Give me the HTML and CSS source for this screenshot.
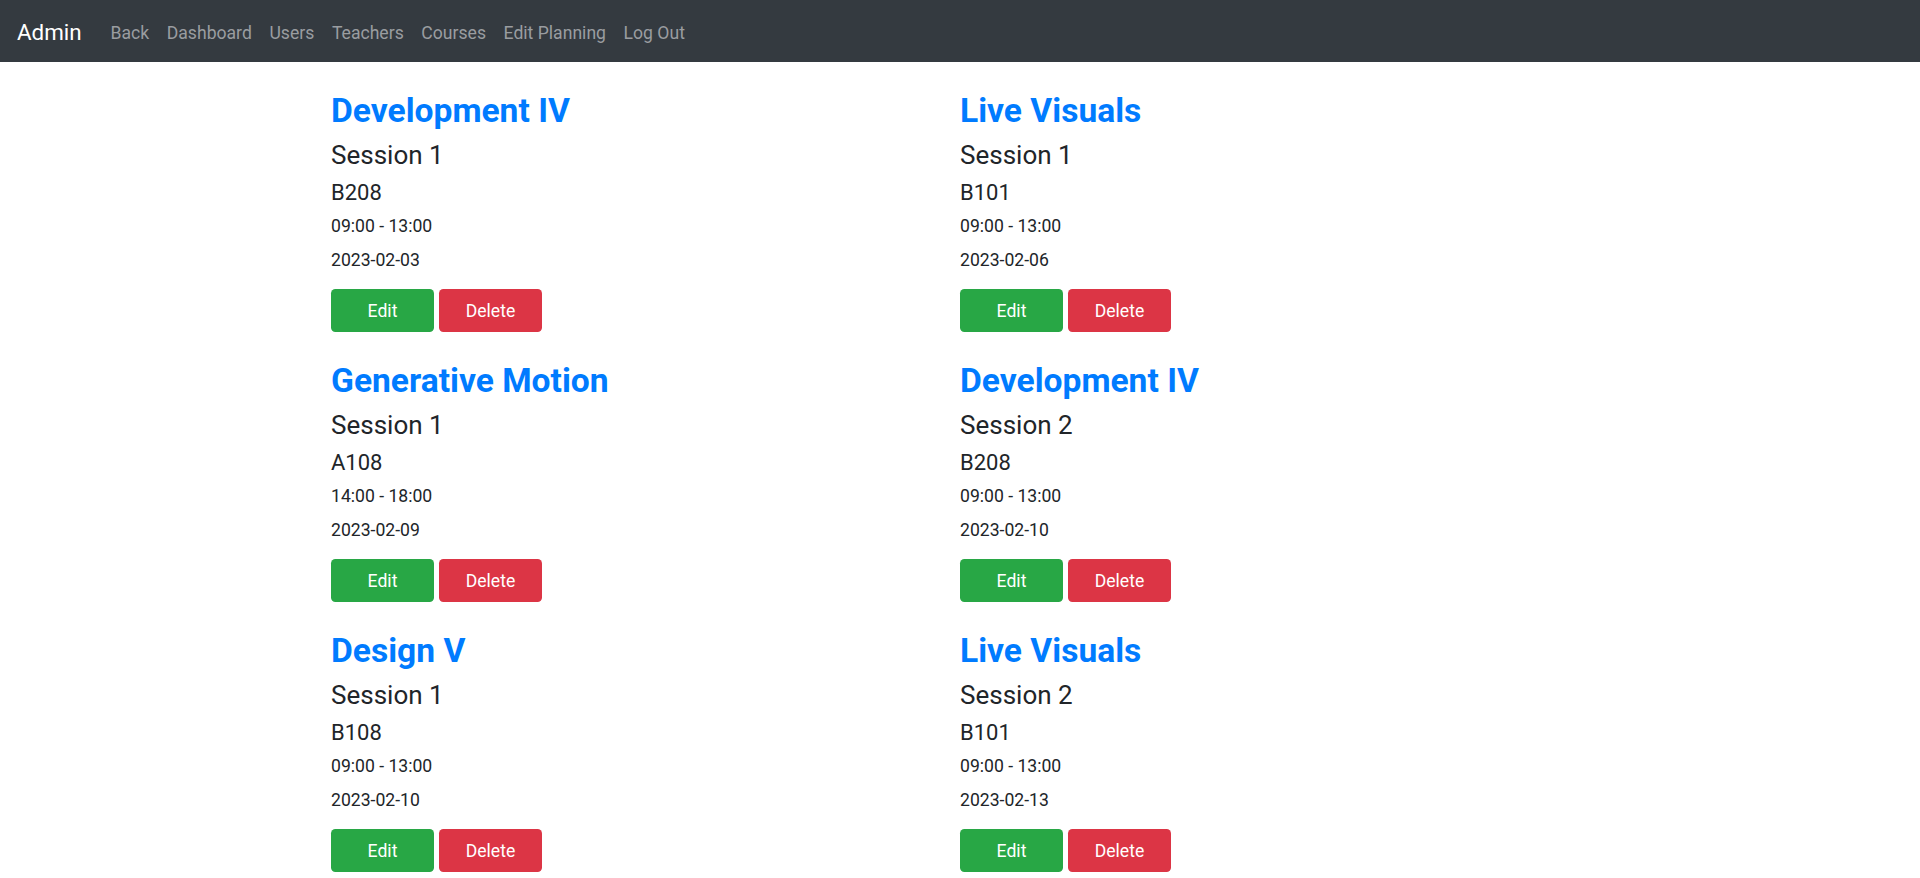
FILE: index.html
```html
<!DOCTYPE html>
<html lang="en">
<head>
<meta charset="utf-8">
<title>Admin - Planning</title>
<link rel="stylesheet" href="styles.css">
</head>
<body>
<nav class="navbar">
  <a class="brand" href="#">Admin</a>
  <ul class="nav">
    <li><a class="nav-link" href="#">Back</a></li>
    <li><a class="nav-link" href="#">Dashboard</a></li>
    <li><a class="nav-link" href="#">Users</a></li>
    <li><a class="nav-link" href="#">Teachers</a></li>
    <li><a class="nav-link" href="#">Courses</a></li>
    <li><a class="nav-link" href="#">Edit Planning</a></li>
    <li><a class="nav-link" href="#">Log Out</a></li>
  </ul>
</nav>
<main class="container">
  <section class="card">
    <h2 class="course">Development IV</h2>
    <h4 class="session">Session 1</h4>
    <h5 class="room">B208</h5>
    <p class="meta">09:00 - 13:00</p>
    <p class="meta date">2023-02-03</p>
    <div class="actions"><a class="btn btn-edit" href="#">Edit</a><a class="btn btn-delete" href="#">Delete</a></div>
  </section>
  <section class="card">
    <h2 class="course">Live Visuals</h2>
    <h4 class="session">Session 1</h4>
    <h5 class="room">B101</h5>
    <p class="meta">09:00 - 13:00</p>
    <p class="meta date">2023-02-06</p>
    <div class="actions"><a class="btn btn-edit" href="#">Edit</a><a class="btn btn-delete" href="#">Delete</a></div>
  </section>
  <section class="card">
    <h2 class="course">Generative Motion</h2>
    <h4 class="session">Session 1</h4>
    <h5 class="room">A108</h5>
    <p class="meta">14:00 - 18:00</p>
    <p class="meta date">2023-02-09</p>
    <div class="actions"><a class="btn btn-edit" href="#">Edit</a><a class="btn btn-delete" href="#">Delete</a></div>
  </section>
  <section class="card">
    <h2 class="course">Development IV</h2>
    <h4 class="session">Session 2</h4>
    <h5 class="room">B208</h5>
    <p class="meta">09:00 - 13:00</p>
    <p class="meta date">2023-02-10</p>
    <div class="actions"><a class="btn btn-edit" href="#">Edit</a><a class="btn btn-delete" href="#">Delete</a></div>
  </section>
  <section class="card">
    <h2 class="course">Design V</h2>
    <h4 class="session">Session 1</h4>
    <h5 class="room">B108</h5>
    <p class="meta">09:00 - 13:00</p>
    <p class="meta date">2023-02-10</p>
    <div class="actions"><a class="btn btn-edit" href="#">Edit</a><a class="btn btn-delete" href="#">Delete</a></div>
  </section>
  <section class="card">
    <h2 class="course">Live Visuals</h2>
    <h4 class="session">Session 2</h4>
    <h5 class="room">B101</h5>
    <p class="meta">09:00 - 13:00</p>
    <p class="meta date">2023-02-13</p>
    <div class="actions"><a class="btn btn-edit" href="#">Edit</a><a class="btn btn-delete" href="#">Delete</a></div>
  </section>
</main>
</body>
</html>
```
FILE: styles.css
```css
* { box-sizing: border-box; }
html, body { margin: 0; padding: 0; }
body {
  font-family: Roboto, "Open Sans", "Liberation Sans", sans-serif;
  color: #212529;
  background: #fff;
  font-size: 17.6px;
}
a { text-decoration: none; }
h2, h4, h5, p { margin: 0; }

.navbar {
  display: flex;
  align-items: center;
  height: 62px;
  padding: 0 16px 0 17px;
  background: #343a40;
}
.brand {
  color: #fff;
  font-size: 22.4px;
  line-height: 30px;
  margin-right: 20px;
  padding-top: 2px;
}
.nav {
  display: flex;
  list-style: none;
  margin: 0;
  padding: 0;
}
.nav-link {
  display: block;
  color: #9a9da0;
  font-size: 17.6px;
  line-height: 26px;
  padding: 4px 8.8px 0;
}

.container {
  width: 1258px;
  margin: 0 auto;
  padding-top: 29px;
  display: grid;
  grid-template-columns: 629px 629px;
  row-gap: 29px;
}
.card { display: flex; flex-direction: column; align-items: flex-start; }
.course {
  color: #007bff;
  font-size: 33.6px;
  font-weight: 700;
  line-height: 40px;
  margin-bottom: 8px;
}
.session {
  font-size: 26px;
  font-weight: 400;
  line-height: 32px;
  margin-bottom: 9px;
}
.room {
  font-size: 22px;
  font-weight: 400;
  line-height: 26px;
  margin-bottom: 6px;
}
.meta {
  font-size: 17.6px;
  line-height: 28px;
}
.date { margin-top: 6px; margin-bottom: 15px; }
.actions { display: flex; gap: 5px; }
.btn {
  display: flex;
  align-items: center;
  justify-content: center;
  width: 103px;
  height: 43px;
  border-radius: 4.4px;
  color: #fff;
  font-size: 17.6px;
}
.btn-edit { background: #28a745; }
.btn-delete { background: #dc3545; }
```
